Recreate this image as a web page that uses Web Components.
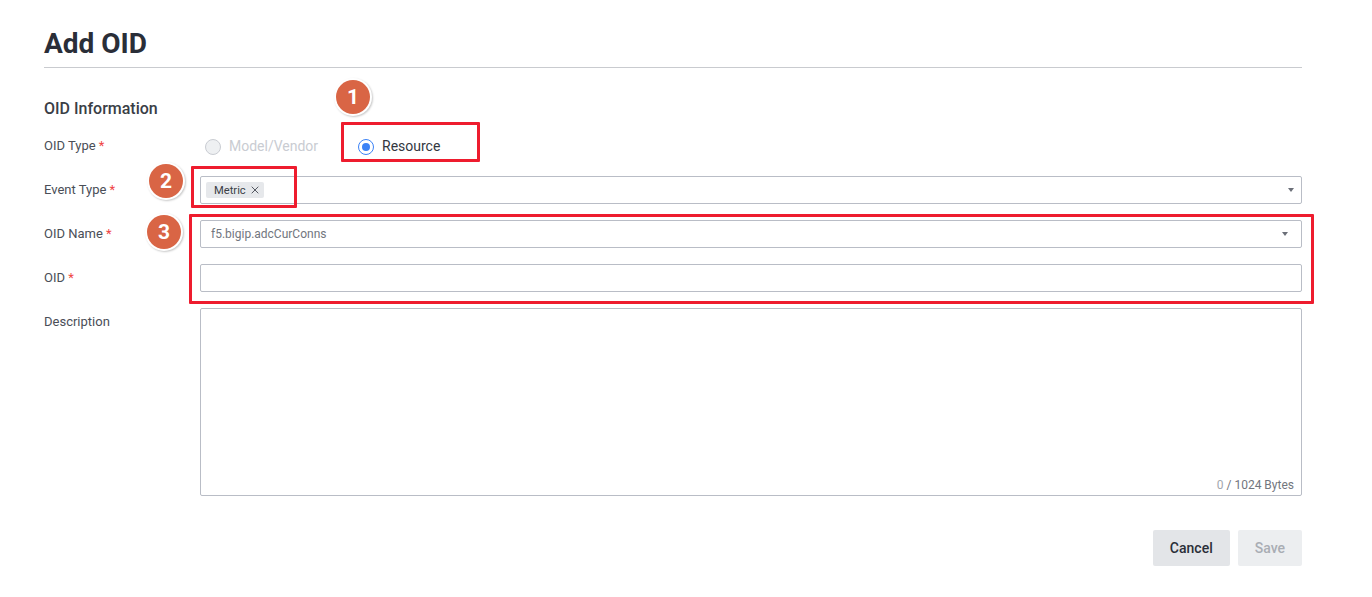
<!DOCTYPE html>
<html lang="en">
<head>
<meta charset="utf-8">
<title>Add OID</title>
<style>
  html, body { margin: 0; background: #fff; }
  body { font-family: Roboto, "Liberation Sans", sans-serif; color: #2b2f38; overflow: hidden; }
</style>
</head>
<body>
<oid-page>
  <form-row label="OID Type" required>
    <div style="display:flex;height:28px;align-items:center">
      <radio-option disabled style="width:148px">Model/Vendor</radio-option>
      <radio-option checked>Resource</radio-option>
    </div>
  </form-row>
  <form-row label="Event Type" required>
    <select-box><tag-chip>Metric</tag-chip></select-box>
  </form-row>
  <form-row label="OID Name" required>
    <select-box value="f5.bigip.adcCurConns" style="--arrow-gap:13px"></select-box>
  </form-row>
  <form-row label="OID" required>
    <text-box></text-box>
  </form-row>
  <form-row label="Description">
    <text-box multiline counter="1024"></text-box>
  </form-row>

  <app-button slot="actions">Cancel</app-button>
  <app-button slot="actions" disabled>Save</app-button>

  <call-out slot="marks" n="1" style="left:336px;top:80px"></call-out>
  <call-out slot="marks" n="2" style="left:149px;top:164px"></call-out>
  <call-out slot="marks" n="3" style="left:147px;top:215px"></call-out>
  <red-box slot="marks" style="left:341px;top:122px;width:139px;height:40px"></red-box>
  <red-box slot="marks" style="left:191px;top:166px;width:106px;height:42px"></red-box>
  <red-box slot="marks" style="left:189px;top:214px;width:1125px;height:90px"></red-box>
</oid-page>

<script>
class OidPage extends HTMLElement {
  constructor() {
    super();
    this.attachShadow({ mode: "open" }).innerHTML = `
    <style>
      :host { display: block; position: relative; width: 1372px; height: 597px; box-sizing: border-box; padding: 0 70px 0 44px; }
      h1 { margin: 0; padding: 27px 0 6px; height: 34px; font-size: 28px; line-height: 34px; font-weight: 700; color: #2a2e38; border-bottom: 1px solid #c9cbcf; }
      h2 { margin: 32px 0 0; font-size: 16px; line-height: 18px; font-weight: 500; color: #3a3e46; }
      .rows { display: flex; flex-direction: column; gap: 16px; margin-top: 14px; }
      .actions { display: flex; justify-content: flex-end; gap: 8px; margin-top: 34px; }
    </style>
    <h1>Add OID</h1>
    <h2>OID Information</h2>
    <div class="rows"><slot></slot></div>
    <div class="actions"><slot name="actions"></slot></div>
    <slot name="marks"></slot>`;
  }
}
customElements.define("oid-page", OidPage);

class FormRow extends HTMLElement {
  connectedCallback() {
    if (this.shadowRoot) return;
    const star = this.hasAttribute("required") ? '<span class="req">*</span>' : "";
    this.attachShadow({ mode: "open" }).innerHTML = `
    <style>
      :host { display: grid; grid-template-columns: 156px 1fr; }
      .label { font-size: 13px; line-height: 28px; color: #4a4e57; }
      .req { color: #ef4444; }
    </style>
    <div class="label">${this.getAttribute("label")} ${star}</div>
    <div><slot></slot></div>`;
  }
}
customElements.define("form-row", FormRow);

class RadioOption extends HTMLElement {
  connectedCallback() {
    if (this.shadowRoot) return;
    this.attachShadow({ mode: "open" }).innerHTML = `
    <style>
      :host { display: inline-flex; align-items: center; gap: 8px; font-size: 14px; color: #33373f; margin-left: 5px; width: 153px; }
      :host([disabled]) { color: #c9ccd2; }
      .dot { width: 16px; height: 16px; box-sizing: border-box; border-radius: 50%; border: 1px solid #3b82f6; background: #fff; position: relative; top: 1px; }
      :host([checked]) .dot::after { content: ""; position: absolute; left: 3px; top: 3px; width: 8px; height: 8px; border-radius: 50%; background: #3b82f6; }
      :host([disabled]) .dot { border-color: #c9ccd2; background: #eef0f2; }
    </style>
    <span class="dot"></span><slot></slot>`;
  }
}
customElements.define("radio-option", RadioOption);

class SelectBox extends HTMLElement {
  connectedCallback() {
    if (this.shadowRoot) return;
    const value = this.getAttribute("value") || "";
    this.attachShadow({ mode: "open" }).innerHTML = `
    <style>
      :host { display: flex; align-items: center; height: 28px; box-sizing: border-box; border: 1px solid #b9bdc6; border-radius: 2px; font-size: 12px; color: #72767e; }
      .inner { flex: 1; display: flex; align-items: center; padding-left: 5px; }
      .value { padding-left: 5px; }
      svg { width: 6px; height: 4px; margin-right: var(--arrow-gap, 7px); flex: none; }
    </style>
    <div class="inner">${value ? `<span class="value">${value}</span>` : ""}<slot></slot></div>
    <svg viewBox="0 0 6 4"><path d="M0 0H6L3 4Z" fill="#6b6f78"/></svg>`;
  }
}
customElements.define("select-box", SelectBox);

class TagChip extends HTMLElement {
  constructor() {
    super();
    this.attachShadow({ mode: "open" }).innerHTML = `
    <style>
      :host { display: inline-flex; align-items: center; height: 16px; padding: 0 5px 0 8px; gap: 5px; background: #e6e8eb; border-radius: 2px; font-size: 11.2px; color: #3a3e46; }
      svg { width: 8px; height: 8px; }
    </style>
    <slot></slot>
    <svg viewBox="0 0 8 8"><path d="M.7.7 7.3 7.3M7.3.7.7 7.3" stroke="#555962" stroke-width="1" fill="none"/></svg>`;
  }
}
customElements.define("tag-chip", TagChip);

class TextBox extends HTMLElement {
  connectedCallback() {
    if (this.shadowRoot) return;
    const counter = this.getAttribute("counter");
    this.attachShadow({ mode: "open" }).innerHTML = `
    <style>
      :host { display: block; position: relative; height: 28px; box-sizing: border-box; border: 1px solid #b9bdc6; border-radius: 2px; }
      :host([multiline]) { height: 188px; }
      .count { position: absolute; right: 7px; bottom: 3px; font-size: 12px; line-height: 14px; color: #72767e; }
      .count b { font-weight: 400; color: #a3a7ae; }
    </style>
    ${counter ? `<div class="count"><b>0</b> / ${counter} Bytes</div>` : ""}`;
  }
}
customElements.define("text-box", TextBox);

class AppButton extends HTMLElement {
  constructor() {
    super();
    this.attachShadow({ mode: "open" }).innerHTML = `
    <style>
      :host { display: inline-flex; align-items: center; justify-content: center; height: 36px; padding: 0 17px; background: #e3e5e8; border-radius: 2px; font-size: 14px; font-weight: 500; color: #2b2f38; }
      :host([disabled]) { background: #eceef0; color: #a9adb4; }
    </style>
    <slot></slot>`;
  }
}
customElements.define("app-button", AppButton);

class CallOut extends HTMLElement {
  connectedCallback() {
    if (this.shadowRoot) return;
    this.attachShadow({ mode: "open" }).innerHTML = `
    <style>
      :host { display: flex; align-items: center; justify-content: center; position: absolute; width: 34px; height: 34px; border-radius: 50%; background: #d96545; color: #fff; font-size: 21px; font-weight: 700; box-shadow: 0 0 0 2px #fff, 1px 1px 2px 2px #c9c9c9; }
    </style>
    ${this.getAttribute("n")}`;
  }
}
customElements.define("call-out", CallOut);

class RedBox extends HTMLElement {
  constructor() {
    super();
    this.attachShadow({ mode: "open" }).innerHTML = `
    <style>
      :host { display: block; position: absolute; box-sizing: border-box; border: 3px solid #ee1c2e; border-radius: 1px; }
    </style>`;
  }
}
customElements.define("red-box", RedBox);
</script>
</body>
</html>
